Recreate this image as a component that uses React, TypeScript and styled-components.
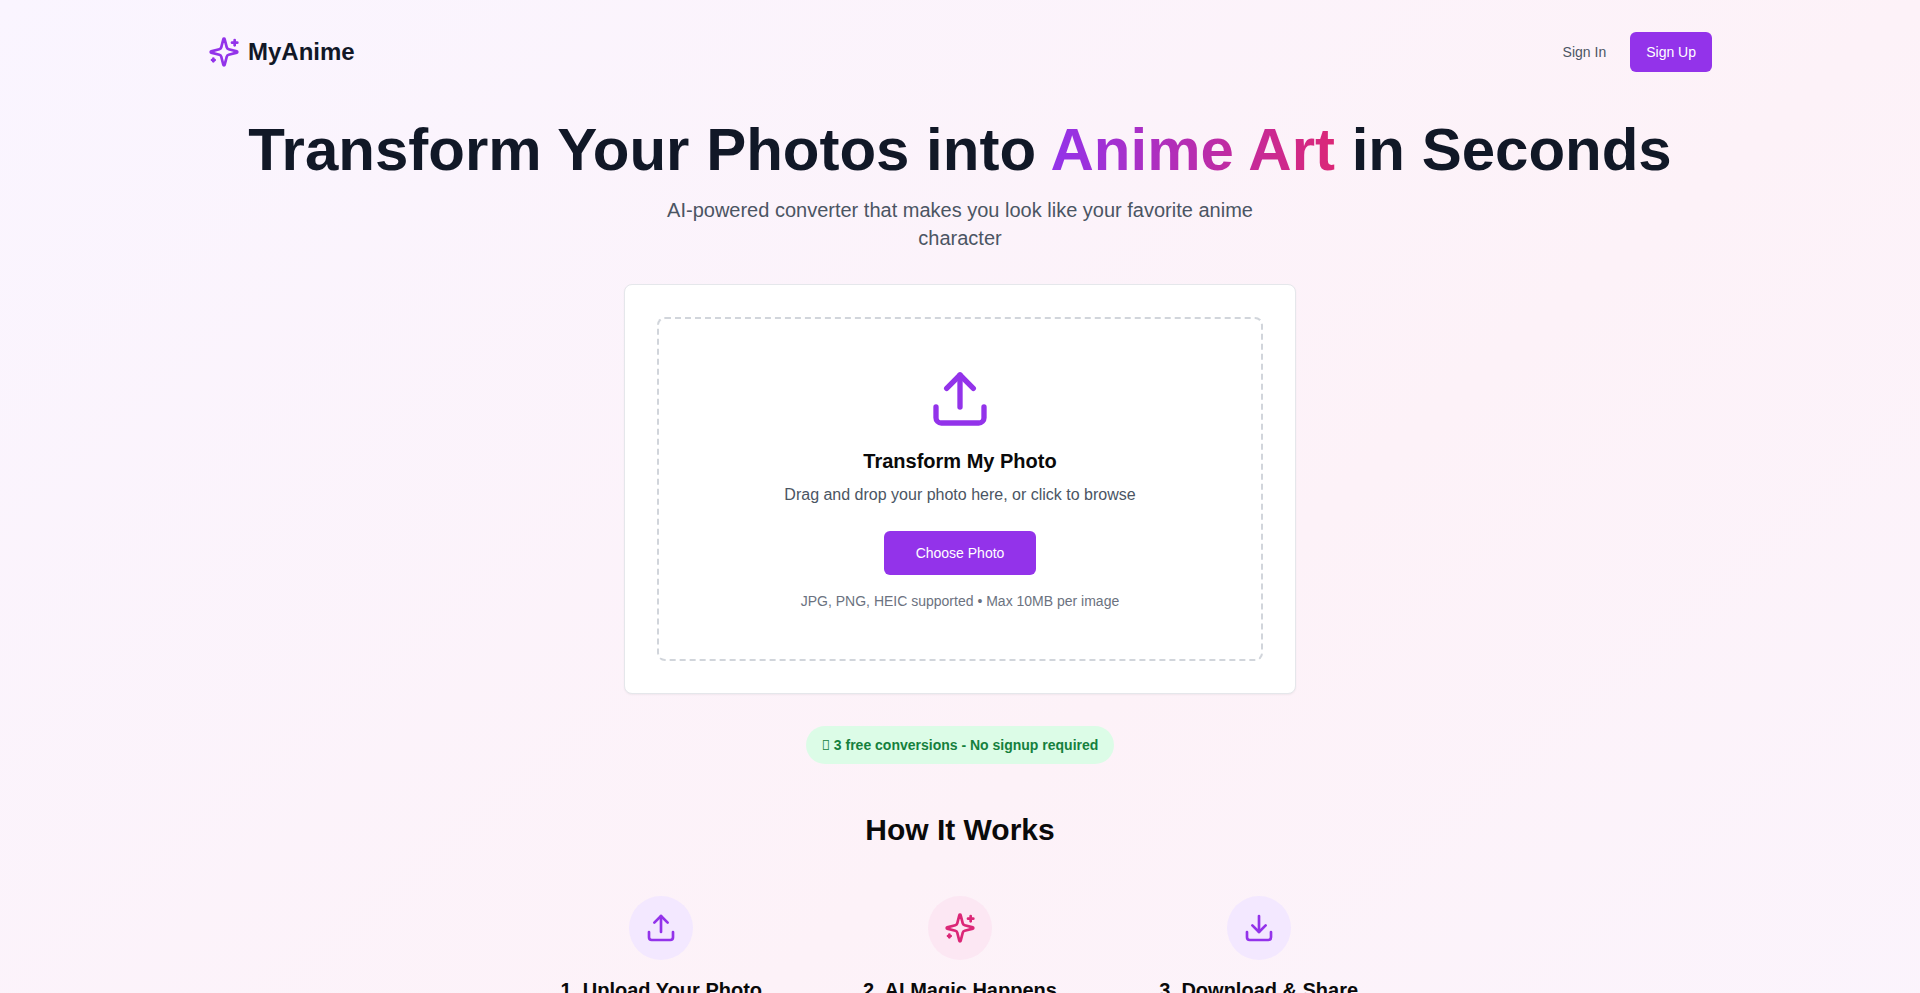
import React from "react";
import styled, { createGlobalStyle } from "styled-components";
import { Upload, Download } from "lucide-react";

const Global = createGlobalStyle`
  * { box-sizing: border-box; }
  html, body { margin: 0; padding: 0; }
  body { font-family: "Liberation Sans", Arial, sans-serif; color: #0a0a0a; }
`;

const Page = styled.div`
  min-height: 1650px;
  background: linear-gradient(to bottom right, #faf5ff, #fdf2f8, #faf5ff);
`;

const Container = styled.div`
  max-width: 1536px;
  margin: 0 auto;
  padding: 32px 16px 64px;
`;

const Header = styled.header`
  display: flex;
  align-items: center;
  justify-content: space-between;
  margin-bottom: 48px;
`;

const Brand = styled.div`
  display: flex;
  align-items: center;
  gap: 8px;
  color: #9333ea;
`;

const BrandName = styled.span`
  font-size: 24px;
  line-height: 32px;
  font-weight: 700;
  color: #111827;
`;

const Nav = styled.nav`
  display: flex;
  align-items: center;
  gap: 8px;
`;

const Button = styled.button<{ $ghost?: boolean; $large?: boolean }>`
  height: ${(p) => (p.$large ? "44px" : "40px")};
  padding: 0 ${(p) => (p.$large ? "32px" : "16px")};
  border: 0;
  border-radius: 6px;
  font: 400 14px/20px "Liberation Sans", Arial, sans-serif;
  color: ${(p) => (p.$ghost ? "#4b5563" : "#ffffff")};
  background: ${(p) => (p.$ghost ? "transparent" : "#9333ea")};
`;

const Hero = styled.section`
  display: flex;
  flex-direction: column;
  align-items: center;
  text-align: center;
`;

const Title = styled.h1`
  margin: 0 0 16px;
  font-size: 60px;
  line-height: 60px;
  font-weight: 700;
  color: #111827;
`;

const Accent = styled.span`
  background: linear-gradient(to right, #9333ea, #db2777);
  -webkit-background-clip: text;
  background-clip: text;
  color: transparent;
`;

const Subtitle = styled.p`
  margin: 0 0 32px;
  max-width: 672px;
  font-size: 20px;
  line-height: 28px;
  color: #4b5563;
`;

const Card = styled.div`
  width: 672px;
  padding: 32px;
  background: #ffffff;
  border: 1px solid #e5e7eb;
  border-radius: 8px;
  box-shadow: 0 1px 2px rgba(0, 0, 0, 0.05);
`;

const DropZone = styled.div`
  display: flex;
  flex-direction: column;
  align-items: center;
  padding: 48px;
  border: 2px dashed #d1d5db;
  border-radius: 8px;
  color: #9333ea;
`;

const DropTitle = styled.h3`
  margin: 16px 0 8px;
  font-size: 20px;
  line-height: 28px;
  font-weight: 600;
  color: #0a0a0a;
`;

const DropText = styled.p`
  margin: 0 0 24px;
  font-size: 16px;
  line-height: 24px;
  color: #4b5563;
`;

const DropHint = styled.p`
  margin: 16px 0 0;
  font-size: 14px;
  line-height: 20px;
  color: #6b7280;
`;

const Badge = styled.div`
  margin-top: 32px;
  padding: 9px 16px;
  background: #dcfce7;
  border-radius: 9999px;
  font-size: 14px;
  line-height: 20px;
  font-weight: 700;
  color: #15803d;
`;

const BadgeGlyph = styled.span`
  font-family: "Noto Sans", sans-serif;
`;

const Section = styled.section`
  max-width: 896px;
  margin: 48px auto 0;
  padding: 0 16px;
`;

const SectionTitle = styled.h2`
  margin: 0 0 48px;
  text-align: center;
  font-size: 30px;
  line-height: 36px;
  font-weight: 700;
  color: #0a0a0a;
`;

const Steps = styled.div`
  display: grid;
  grid-template-columns: repeat(3, 1fr);
  gap: 32px;
`;

const Step = styled.div`
  display: flex;
  flex-direction: column;
  align-items: center;
  text-align: center;
`;

const StepIcon = styled.div<{ $pink?: boolean }>`
  display: flex;
  align-items: center;
  justify-content: center;
  width: 64px;
  height: 64px;
  margin-bottom: 16px;
  border-radius: 50%;
  background: ${(p) => (p.$pink ? "#fce7f3" : "#f3e8ff")};
  color: ${(p) => (p.$pink ? "#db2777" : "#9333ea")};
`;

const StepTitle = styled.h3`
  margin: 0;
  font-size: 20px;
  line-height: 28px;
  font-weight: 600;
  color: #0a0a0a;
`;

function SparkIcon({ size }: { size: number }) {
  return (
    <svg width={size} height={size} viewBox="0 0 24 24" fill="none" stroke="currentColor" strokeWidth={2} strokeLinecap="round" strokeLinejoin="round">
      <path d="M9.937 15.5A2 2 0 0 0 8.5 14.063l-6.135-1.582a.5.5 0 0 1 0-.962L8.5 9.936A2 2 0 0 0 9.937 8.5l1.582-6.135a.5.5 0 0 1 .963 0L14.063 8.5A2 2 0 0 0 15.5 9.937l6.135 1.581a.5.5 0 0 1 0 .964L15.5 14.063a2 2 0 0 0-1.437 1.437l-1.582 6.135a.5.5 0 0 1-.963 0z" />
      <path d="M20 3v4" />
      <path d="M22 5h-4" />
      <path d="M4 17v2" />
      <path d="M5 18H3" />
    </svg>
  );
}

export default function App() {
  return (
    <Page>
      <Global />
      <Container>
        <Header>
          <Brand>
            <SparkIcon size={32} />
            <BrandName>MyAnime</BrandName>
          </Brand>
          <Nav>
            <Button $ghost>Sign In</Button>
            <Button>Sign Up</Button>
          </Nav>
        </Header>
        <Hero>
          <Title>
            Transform Your Photos into <Accent>Anime Art</Accent> in Seconds
          </Title>
          <Subtitle>
            AI-powered converter that makes you look like your favorite anime character
          </Subtitle>
          <Card>
            <DropZone>
              <Upload size={64} />
              <DropTitle>Transform My Photo</DropTitle>
              <DropText>Drag and drop your photo here, or click to browse</DropText>
              <Button $large>Choose Photo</Button>
              <DropHint>JPG, PNG, HEIC supported • Max 10MB per image</DropHint>
            </DropZone>
          </Card>
          <Badge><BadgeGlyph>{"\uE000"}</BadgeGlyph> 3 free conversions - No signup required</Badge>
        </Hero>
        <Section>
          <SectionTitle>How It Works</SectionTitle>
          <Steps>
            <Step>
              <StepIcon><Upload size={32} /></StepIcon>
              <StepTitle>1. Upload Your Photo</StepTitle>
            </Step>
            <Step>
              <StepIcon $pink><SparkIcon size={32} /></StepIcon>
              <StepTitle>2. AI Magic Happens</StepTitle>
            </Step>
            <Step>
              <StepIcon><Download size={32} /></StepIcon>
              <StepTitle>3. Download &amp; Share</StepTitle>
            </Step>
          </Steps>
        </Section>
      </Container>
    </Page>
  );
}
